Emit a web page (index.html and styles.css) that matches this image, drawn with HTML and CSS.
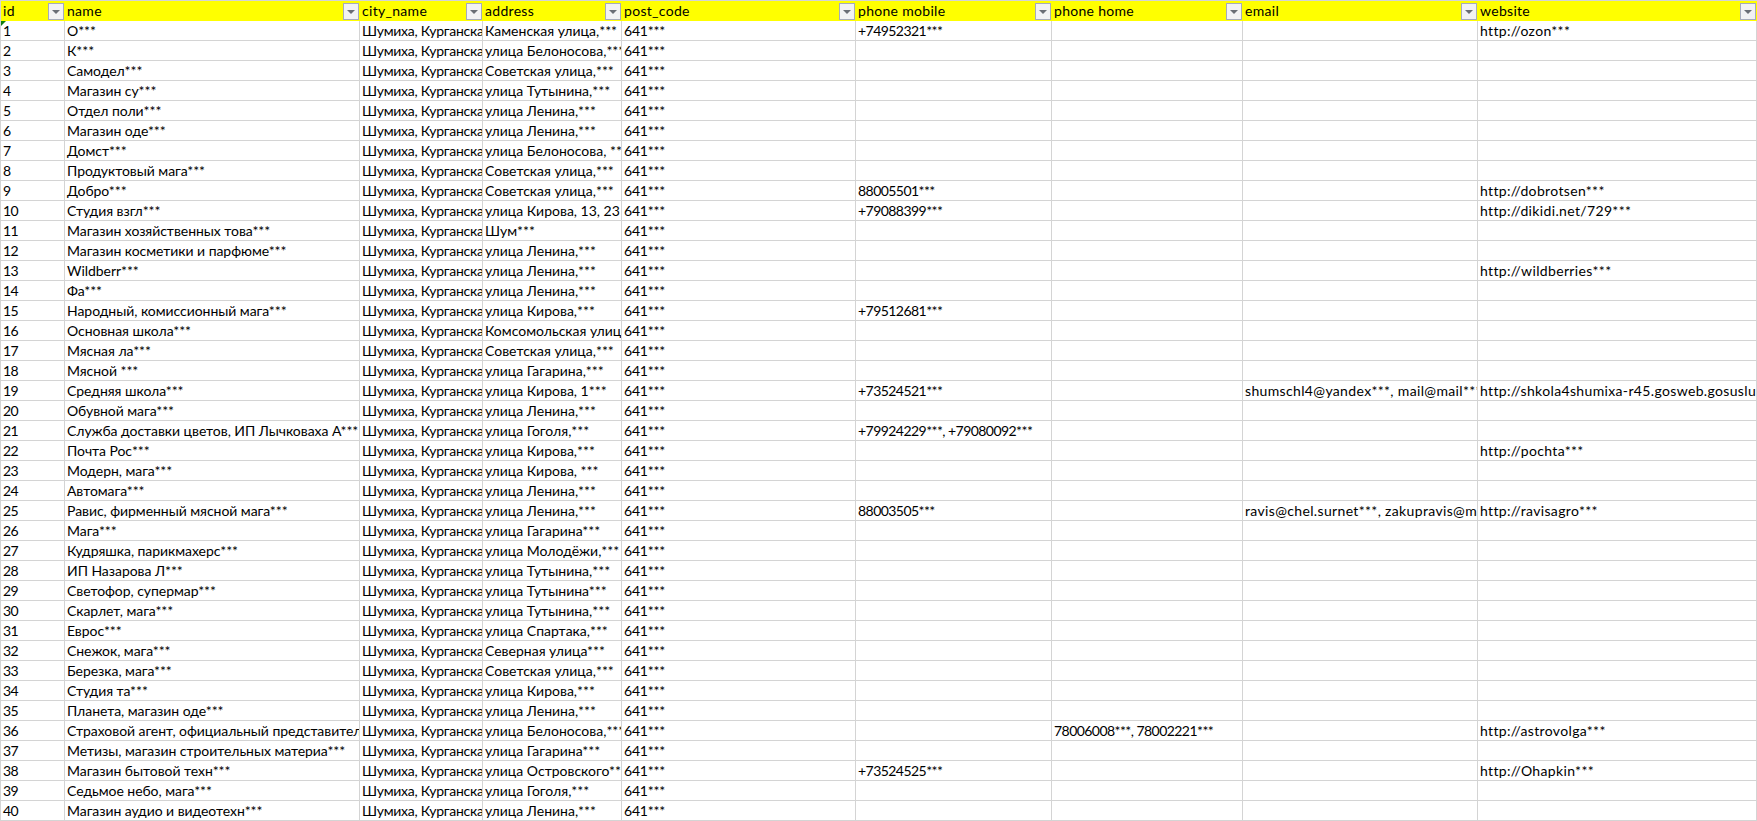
FILE: index.html
```html
<!DOCTYPE html>
<html lang="ru">
<head>
<meta charset="utf-8">
<title>Sheet</title>
<link rel="stylesheet" href="styles.css">
</head>
<body>
<table class="sheet">
<colgroup><col class="c1"><col class="c2"><col class="c3"><col class="c4"><col class="c5"><col class="c6"><col class="c7"><col class="c8"><col class="c9"></colgroup>
<thead><tr>
<th><div class="head">id<span class="filter"></span></div></th>
<th><div class="head">name<span class="filter"></span></div></th>
<th><div class="head">city_name<span class="filter"></span></div></th>
<th><div class="head">address<span class="filter"></span></div></th>
<th><div class="head">post_code<span class="filter"></span></div></th>
<th><div class="head">phone mobile<span class="filter"></span></div></th>
<th><div class="head">phone home<span class="filter"></span></div></th>
<th><div class="head">email<span class="filter"></span></div></th>
<th><div class="head">website<span class="filter"></span></div></th>
</tr></thead>
<tbody>
<tr><td class="flagged">1</td><td>О***</td><td>Шумиха, Курганская область</td><td>Каменская улица,***</td><td>641***</td><td>+74952321***</td><td></td><td></td><td>http://ozon***</td></tr>
<tr><td>2</td><td>К***</td><td>Шумиха, Курганская область</td><td>улица Белоносова,***</td><td>641***</td><td></td><td></td><td></td><td></td></tr>
<tr><td>3</td><td>Самодел***</td><td>Шумиха, Курганская область</td><td>Советская улица,***</td><td>641***</td><td></td><td></td><td></td><td></td></tr>
<tr><td>4</td><td>Магазин су***</td><td>Шумиха, Курганская область</td><td>улица Тутынина,***</td><td>641***</td><td></td><td></td><td></td><td></td></tr>
<tr><td>5</td><td>Отдел поли***</td><td>Шумиха, Курганская область</td><td>улица Ленина,***</td><td>641***</td><td></td><td></td><td></td><td></td></tr>
<tr><td>6</td><td>Магазин оде***</td><td>Шумиха, Курганская область</td><td>улица Ленина,***</td><td>641***</td><td></td><td></td><td></td><td></td></tr>
<tr><td>7</td><td>Домст***</td><td>Шумиха, Курганская область</td><td>улица Белоносова, ***</td><td>641***</td><td></td><td></td><td></td><td></td></tr>
<tr><td>8</td><td>Продуктовый мага***</td><td>Шумиха, Курганская область</td><td>Советская улица,***</td><td>641***</td><td></td><td></td><td></td><td></td></tr>
<tr><td>9</td><td>Добро***</td><td>Шумиха, Курганская область</td><td>Советская улица,***</td><td>641***</td><td>88005501***</td><td></td><td></td><td>http://dobrotsen***</td></tr>
<tr><td>10</td><td>Студия взгл***</td><td>Шумиха, Курганская область</td><td>улица Кирова, 13, 23 км***</td><td>641***</td><td>+79088399***</td><td></td><td></td><td>http://dikidi.net/729***</td></tr>
<tr><td>11</td><td>Магазин хозяйственных това***</td><td>Шумиха, Курганская область</td><td>Шум***</td><td>641***</td><td></td><td></td><td></td><td></td></tr>
<tr><td>12</td><td>Магазин косметики и парфюме***</td><td>Шумиха, Курганская область</td><td>улица Ленина,***</td><td>641***</td><td></td><td></td><td></td><td></td></tr>
<tr><td>13</td><td>Wildberr***</td><td>Шумиха, Курганская область</td><td>улица Ленина,***</td><td>641***</td><td></td><td></td><td></td><td>http://wildberries***</td></tr>
<tr><td>14</td><td>Фа***</td><td>Шумиха, Курганская область</td><td>улица Ленина,***</td><td>641***</td><td></td><td></td><td></td><td></td></tr>
<tr><td>15</td><td>Народный, комиссионный мага***</td><td>Шумиха, Курганская область</td><td>улица Кирова,***</td><td>641***</td><td>+79512681***</td><td></td><td></td><td></td></tr>
<tr><td>16</td><td>Основная школа***</td><td>Шумиха, Курганская область</td><td>Комсомольская улица***</td><td>641***</td><td></td><td></td><td></td><td></td></tr>
<tr><td>17</td><td>Мясная ла***</td><td>Шумиха, Курганская область</td><td>Советская улица,***</td><td>641***</td><td></td><td></td><td></td><td></td></tr>
<tr><td>18</td><td>Мясной ***</td><td>Шумиха, Курганская область</td><td>улица Гагарина,***</td><td>641***</td><td></td><td></td><td></td><td></td></tr>
<tr><td>19</td><td>Средняя школа***</td><td>Шумиха, Курганская область</td><td>улица Кирова, 1***</td><td>641***</td><td>+73524521***</td><td></td><td>shumschl4@yandex***, mail@mail***</td><td>http://shkola4shumixa-r45.gosweb.gosuslugi.ru***</td></tr>
<tr><td>20</td><td>Обувной мага***</td><td>Шумиха, Курганская область</td><td>улица Ленина,***</td><td>641***</td><td></td><td></td><td></td><td></td></tr>
<tr><td>21</td><td>Служба доставки цветов, ИП Лычковаха А***</td><td>Шумиха, Курганская область</td><td>улица Гоголя,***</td><td>641***</td><td>+79924229***, +79080092***</td><td></td><td></td><td></td></tr>
<tr><td>22</td><td>Почта Рос***</td><td>Шумиха, Курганская область</td><td>улица Кирова,***</td><td>641***</td><td></td><td></td><td></td><td>http://pochta***</td></tr>
<tr><td>23</td><td>Модерн, мага***</td><td>Шумиха, Курганская область</td><td>улица Кирова, ***</td><td>641***</td><td></td><td></td><td></td><td></td></tr>
<tr><td>24</td><td>Автомага***</td><td>Шумиха, Курганская область</td><td>улица Ленина,***</td><td>641***</td><td></td><td></td><td></td><td></td></tr>
<tr><td>25</td><td>Равис, фирменный мясной мага***</td><td>Шумиха, Курганская область</td><td>улица Ленина,***</td><td>641***</td><td>88003505***</td><td></td><td>ravis@chel.surnet***, zakupravis@mail***</td><td>http://ravisagro***</td></tr>
<tr><td>26</td><td>Мага***</td><td>Шумиха, Курганская область</td><td>улица Гагарина***</td><td>641***</td><td></td><td></td><td></td><td></td></tr>
<tr><td>27</td><td>Кудряшка, парикмахерс***</td><td>Шумиха, Курганская область</td><td>улица Молодёжи,***</td><td>641***</td><td></td><td></td><td></td><td></td></tr>
<tr><td>28</td><td>ИП Назарова Л***</td><td>Шумиха, Курганская область</td><td>улица Тутынина,***</td><td>641***</td><td></td><td></td><td></td><td></td></tr>
<tr><td>29</td><td>Светофор, супермар***</td><td>Шумиха, Курганская область</td><td>улица Тутынина***</td><td>641***</td><td></td><td></td><td></td><td></td></tr>
<tr><td>30</td><td>Скарлет, мага***</td><td>Шумиха, Курганская область</td><td>улица Тутынина,***</td><td>641***</td><td></td><td></td><td></td><td></td></tr>
<tr><td>31</td><td>Еврос***</td><td>Шумиха, Курганская область</td><td>улица Спартака,***</td><td>641***</td><td></td><td></td><td></td><td></td></tr>
<tr><td>32</td><td>Снежок, мага***</td><td>Шумиха, Курганская область</td><td>Северная улица***</td><td>641***</td><td></td><td></td><td></td><td></td></tr>
<tr><td>33</td><td>Березка, мага***</td><td>Шумиха, Курганская область</td><td>Советская улица,***</td><td>641***</td><td></td><td></td><td></td><td></td></tr>
<tr><td>34</td><td>Студия та***</td><td>Шумиха, Курганская область</td><td>улица Кирова,***</td><td>641***</td><td></td><td></td><td></td><td></td></tr>
<tr><td>35</td><td>Планета, магазин оде***</td><td>Шумиха, Курганская область</td><td>улица Ленина,***</td><td>641***</td><td></td><td></td><td></td><td></td></tr>
<tr><td>36</td><td>Страховой агент, официальный представитель***</td><td>Шумиха, Курганская область</td><td>улица Белоносова,***</td><td>641***</td><td></td><td>78006008***, 78002221***</td><td></td><td>http://astrovolga***</td></tr>
<tr><td>37</td><td>Метизы, магазин строительных материа***</td><td>Шумиха, Курганская область</td><td>улица Гагарина***</td><td>641***</td><td></td><td></td><td></td><td></td></tr>
<tr><td>38</td><td>Магазин бытовой техн***</td><td>Шумиха, Курганская область</td><td>улица Островского***</td><td>641***</td><td>+73524525***</td><td></td><td></td><td>http://Ohapkin***</td></tr>
<tr><td>39</td><td>Седьмое небо, мага***</td><td>Шумиха, Курганская область</td><td>улица Гоголя,***</td><td>641***</td><td></td><td></td><td></td><td></td></tr>
<tr><td>40</td><td>Магазин аудио и видеотехн***</td><td>Шумиха, Курганская область</td><td>улица Ленина,***</td><td>641***</td><td></td><td></td><td></td><td></td></tr>
</tbody>
</table>
</body>
</html>
```
FILE: styles.css
```css
html, body {
  margin: 0;
  padding: 0;
  background: #fff;
  overflow: hidden;
}
.sheet {
  table-layout: fixed;
  width: 1757px;
  border-collapse: separate;
  border-spacing: 0;
  border-left: 1px solid #d4d4d4;
  border-top: 1px solid #d4d4d4;
  font: 14px/18px Lato, "Noto Sans", sans-serif;
  color: #000;
}
.c1 { width: 64px; }
.c2 { width: 295px; }
.c3 { width: 123px; }
.c4 { width: 139px; }
.c5 { width: 234px; }
.c6 { width: 196px; }
.c7 { width: 191px; }
.c8 { width: 235px; }
.c9 { width: 279px; }
th {
  padding: 0;
  height: 20px;
  background: #ffff00;
  font-weight: 400;
  text-align: left;
  letter-spacing: 0.3px;
}
.head {
  display: flex;
  align-items: center;
  justify-content: space-between;
  height: 20px;
  padding-left: 2px;
  box-sizing: border-box;
}
.filter {
  position: relative;
  flex: none;
  width: 16px;
  height: 17px;
  margin-right: 1px;
  box-sizing: border-box;
  border: 1px solid #a5abbc;
  background: #f2f2f4;
}
.filter::after {
  content: "";
  position: absolute;
  left: 3px;
  top: 6px;
  border-left: 4px solid transparent;
  border-right: 4px solid transparent;
  border-top: 4px solid #6a6e76;
}
td {
  height: 18px;
  padding: 1px 0 0 2px;
  box-sizing: content-box;
  border-right: 1px solid #d4d4d4;
  border-bottom: 1px solid #d4d4d4;
  white-space: nowrap;
  overflow: hidden;
  vertical-align: middle;
}
td:nth-child(1),
td:nth-child(6),
td:nth-child(7) {
  letter-spacing: -0.55px;
}
td:nth-child(2) {
  letter-spacing: -0.05px;
}
td:nth-child(3) {
  letter-spacing: -0.25px;
}
td:nth-child(5) {
  letter-spacing: -0.2px;
}
td:nth-child(8),
td:nth-child(9) {
  letter-spacing: 0.35px;
}
.flagged {
  position: relative;
}
.flagged::before {
  content: "";
  position: absolute;
  left: 0;
  top: 0;
  border-top: 5px solid #107c10;
  border-right: 5px solid transparent;
}
```
